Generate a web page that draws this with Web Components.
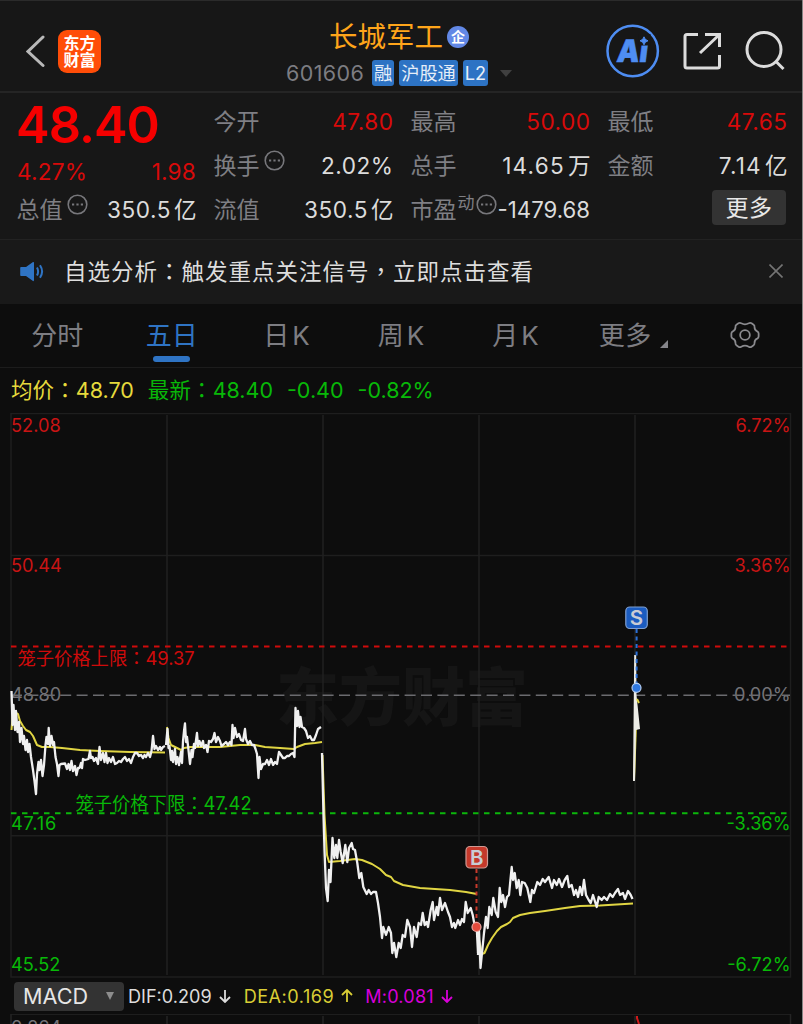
<!DOCTYPE html>
<html lang="zh-CN">
<head>
<meta charset="utf-8">
<title>长城军工 601606</title>
<style>
  html, body {
    margin: 0;
    height: 1024px;
    overflow: hidden;
    background: #0d0d0d;
  }
  body {
    font-family: Inter, "Noto Sans CJK SC", sans-serif;
    color: #dcdcdc;
  }
</style>
</head>
<body>
<stock-app></stock-app>

<script>
class StockApp extends HTMLElement {
  connectedCallback() {
    this.attachShadow({ mode: "open" });
    this.shadowRoot.innerHTML = `
    <style>
      :host {
        display: flex;
        flex-direction: column;
        box-sizing: border-box;
        width: 803px;
        height: 1024px;
        overflow: hidden;
        border-right: 1px solid #858585;
        background: #0d0d0d;
      }
    </style>
    <stock-header name="长城军工" code="601606"></stock-header>
    <quote-panel></quote-panel>
    <notice-bar>自选分析<span lang="zh-TW">：</span>触发重点关注信号<span lang="zh-TW">，</span>立即点击查看</notice-bar>
    <period-tabs></period-tabs>
    <price-legend></price-legend>
    <price-chart></price-chart>
    <macd-bar></macd-bar>
    <macd-chart></macd-chart>
    `;
  }
}

class StockHeader extends HTMLElement {
  connectedCallback() {
    this.attachShadow({ mode: "open" });
    this.shadowRoot.innerHTML = `
    <style>
      :host {
        display: grid;
        grid-template-columns: 270px 1fr 211px;
        box-sizing: border-box;
        height: 93px;
        flex: none;
        background: #171717;
        border-top: 1px solid #2b2b2b;
        border-bottom: 2px solid #252525;
      }
      svg { display: block; flex: none; fill: none; }
      .left { display: flex; align-items: center; box-sizing: border-box; padding: 11px 0 0 26px; gap: 12px; height: 89px; }
      .logo {
        display: flex;
        align-items: center;
        justify-content: center;
        width: 43px;
        height: 43px;
        border-radius: 9px;
        background: #ff4d08;
        color: #fff;
        font: 700 16px/17px "Noto Sans CJK SC";
      }
      .mid { display: flex; flex-direction: column; align-items: flex-start; padding: 16px 0 0 16px; }
      .name { display: flex; align-items: center; box-sizing: border-box; height: 38px; padding: 1px 0 0 43px; color: #ffa51a; font-size: 28.5px; line-height: 37px; }
      .ent {
        width: 22px; height: 22px; margin-left: 4px; border-radius: 50%;
        background: #6288e6; color: #fff;
        font-size: 14px; font-weight: 700; line-height: 22px; text-align: center;
      }
      .sub { display: flex; align-items: center; height: 26px; margin-top: 5px; }
      .code { width: 86px; font-size: 21.500px; letter-spacing: .4px; color: #7d7d82; }
      .tag { box-sizing: border-box; height: 26px; margin-right: 5px; padding: 0 2px; border-radius: 3px; background: #2d73c4; color: #e6eef8; font-size: 18.2px; line-height: 26px; }
      .arrow { margin-left: 7px; border: 6px solid transparent; border-top: 7px solid #404040; border-bottom: 0; }
      .right { display: flex; align-items: center; padding-left: 14px; height: 100px; }
    </style>
    <div class="left">
      <svg width="20" height="36" stroke="#b9b9b9" stroke-width="3" stroke-linecap="round"><path d="M17 4 2 18.500 17 32.500"/></svg>
      <div class="logo"><span>东方<br>财富</span></div>
    </div>
    <div class="mid">
      <div class="name">${this.getAttribute("name")}<span class="ent">企</span></div>
      <div class="sub">
        <span class="code">${this.getAttribute("code")}</span>
        <span class="tag">融</span><span class="tag">沪股通</span><span class="tag">L2</span>
        <span class="arrow"></span>
      </div>
    </div>
    <div class="right">
      <svg width="180" height="60" viewBox="605 21 180 60">
        <circle cx="632.7" cy="51" r="25.200" stroke="#4e8df2" stroke-width="2.500"/>
        <text transform="translate(616 62) skewX(-7)" font-size="31" font-weight="900" fill="#4e8df2" stroke="#4e8df2" stroke-width=".6" textLength="31" lengthAdjust="spacingAndGlyphs">Ai</text>
        <path d="M638.500 34h12v11.500h-12z" fill="#171717"/>
        <path d="M644 36.800q.7 3.200 4 4q-3.300.8-4 4q-.7-3.200-4-4q3.300-.8 4-4z" fill="#4e8df2" stroke="#4e8df2"/>
        <g stroke="#dcdcdc" stroke-width="3">
          <path d="M698 34.500H687q-2 0-2 2V66q0 2 2 2h30.500q2 0 2-2V55M705 34.500h14.500V47M719.500 34.500 700 53"/>
          <circle cx="764" cy="49.500" r="17"/>
          <path d="m775.500 61 8 8"/>
        </g>
      </svg>
    </div>
    `;
  }
}

// label on the left, slotted value on the right
class QuoteCell extends HTMLElement {
  connectedCallback() {
    const info = this.hasAttribute("info")
      ? `<svg width="21" height="21" fill="none" stroke="#77777b" stroke-width="1.600"><circle cx="10.500" cy="10.500" r="9.300"/><path d="M5 10.500h2.200M9.400 10.500h2.200M13.800 10.500H16" stroke-width="2.200"/></svg>`
      : "";
    const sup = this.getAttribute("sup") || "";
    this.attachShadow({ mode: "open" });
    this.shadowRoot.innerHTML = `
    <style>
      :host { display: flex; height: 44px; line-height: 44px; font-size: 22.600px; white-space: nowrap; color: #dcdcdc; }
      :host([up]) { color: #d80a0a; }
      .label { margin-left: -.5px; font-size: 23px; color: #7f7f84; }
      sup { font-size: 17px; line-height: 30px; color: #7f7f84; vertical-align: top; margin-left: 1px; }
      svg { margin: 6px 0 0 4px; }
      sup + svg { margin-left: 1px; }
      .value { margin-left: auto; letter-spacing: .5px; margin-right: -.5px; }
      sup ~ .value { font-size: 22.200px; letter-spacing: 0; margin-right: 0; }
    </style>
    <span class="label">${this.getAttribute("label")}</span>${sup ? `<sup>${sup}</sup>` : ""}${info}
    <span class="value"><slot></slot></span>
    `;
  }
}

class QuotePanel extends HTMLElement {
  connectedCallback() {
    this.attachShadow({ mode: "open" });
    this.shadowRoot.innerHTML = `
    <style>
      :host {
        display: grid;
        grid-template-columns: repeat(4, 179px);
        column-gap: 18px;
        box-sizing: border-box;
        height: 147px;
        flex: none;
        padding: 7px 0 0 17px;
        background: #171717;
        border-bottom: 1px solid #222;
      }
      .price { height: 50px; margin-left: -1px; font-size: 50.500px; font-weight: 600; line-height: 50px; letter-spacing: -1px; color: #f50000; }
      .change { display: flex; justify-content: space-between; height: 38px; font-size: 22.600px; line-height: 44px; letter-spacing: .2px; color: #d80a0a; }
      .u { margin-left: 3px; letter-spacing: 0; }
      .wide { letter-spacing: 1.200px; }
      .more { width: 74px; height: 35px; margin: 2px 1px 0 auto; border-radius: 4px; background: #333; font-size: 23px; line-height: 36px; text-align: center; color: #e8e8e8; letter-spacing: .5px; }
    </style>
    <div>
      <div class="price">48.40</div>
      <div class="change"><span>4.27%</span><span>1.98</span></div>
      <quote-cell label="总值" info>350.5<span class="u">亿</span></quote-cell>
    </div>
    <div>
      <quote-cell label="今开" up>47.80</quote-cell>
      <quote-cell label="换手" info>2.02%</quote-cell>
      <quote-cell label="流值">350.5<span class="u">亿</span></quote-cell>
    </div>
    <div>
      <quote-cell label="最高" up>50.00</quote-cell>
      <quote-cell label="总手"><span class="wide">14.65</span><span class="u">万</span></quote-cell>
      <quote-cell label="市盈" sup="动" info>-1479.68</quote-cell>
    </div>
    <div>
      <quote-cell label="最低" up>47.65</quote-cell>
      <quote-cell label="金额"><span class="wide">7.14</span><span class="u">亿</span></quote-cell>
      <div class="more">更多</div>
    </div>
    `;
  }
}

class NoticeBar extends HTMLElement {
  connectedCallback() {
    this.attachShadow({ mode: "open" });
    this.shadowRoot.innerHTML = `
    <style>
      :host {
        display: flex;
        align-items: center;
        box-sizing: border-box;
        height: 64px;
        flex: none;
        padding: 0 19px 2px 20px;
        background: #191919;
        font-size: 22.500px;
        letter-spacing: 1px;
        color: #dedede;
      }
      ::slotted(span) { font-family: "Noto Sans CJK TC"; }
      p { margin: 0 auto 0 19px; line-height: 32px; }
    </style>
    <svg width="25" height="22" fill="none" stroke="#2f74c4" stroke-width="2"><path d="M1 7h5l7-5q1-.5 1 1v17q0 1.500-1 1l-7-5H1q-.8 0-.8-1V8q0-1 .8-1z" fill="#2f74c4" stroke="none"/><path d="M17 7.500q2.200 4 0 8M20 5.200q4.200 6.300 0 12.600"/></svg>
    <p><slot></slot></p>
    <svg width="14" height="14" stroke="#747474" stroke-width="1.600"><path d="m.5.5 13 13M13.500.5l-13 13"/></svg>
    `;
  }
}

class PeriodTabs extends HTMLElement {
  connectedCallback() {
    this.attachShadow({ mode: "open" });
    const tabs = ["分时", "五日", "日<b></b>K", "周<b></b>K", "月<b></b>K", "更多"];
    this.shadowRoot.innerHTML = `
    <style>
      :host {
        display: grid;
        grid-template-columns: repeat(7, 1fr);
        box-sizing: border-box;
        height: 64px;
        flex: none;
        border-bottom: 1px solid #1c1c1c;
        font-size: 26px;
        color: #7d7d82;
      }
      div { display: flex; flex-direction: column; align-items: center; }
      span { height: 52px; line-height: 63px; white-space: nowrap; }
      b { display: inline-block; width: 3px; }
      .on { color: #2f74c4; }
      .on::after { content: ""; width: 37px; height: 6px; border-radius: 3px; background: #2f74c4; }
      .more { flex-direction: row; justify-content: center; align-items: flex-start; gap: 8px; padding-left: 6px; letter-spacing: .5px; }
      .more::after { content: ""; margin-top: 36px; border-left: 8px solid transparent; border-bottom: 8px solid #85858a; }
      .gear { justify-content: center; padding-bottom: 2px; }
    </style>
    ${tabs.map((t, i) => `<div class="${i === 1 ? "on" : i === 5 ? "more" : ""}"><span>${t}</span></div>`).join("")}
    <div class="gear"><svg width="30" height="28" viewBox="-16 -15 32 30" fill="none" stroke="#8a8a8e" stroke-width="1.900" stroke-linejoin="round">
      <path d="M-4-12.500q4 2.200 8 0q1.500-1 3 0l2.200 1.500q1.200.8 1 2.500q0 3.500 2.800 4.600q1.600.8 1.600 2.200v3.400q0 1.400-1.600 2.200q-2.800 1.100-2.800 4.600q.2 1.700-1 2.500L7 12.500q-1.500 1-3 0q-4-2.200-8 0q-1.500 1-3 0L-9.200 11q-1.200-.8-1-2.500q0-3.500-2.800-4.600q-1.600-.8-1.600-2.200v-3.400q0-1.400 1.600-2.200q2.800-1.100 2.800-4.600q-.2-1.700 1-2.500L-7-12.500q1.500-1 3 0z"/>
      <circle r="5.200"/></svg></div>
    `;
  }
}

class PriceLegend extends HTMLElement {
  connectedCallback() {
    this.attachShadow({ mode: "open" });
    this.shadowRoot.innerHTML = `
    <style>
      :host { display: flex; gap: 14px; height: 45px; flex: none; padding-left: 11px; font-size: 21.500px; line-height: 45px; color: #08b808; white-space: nowrap; }
      i { font-style: normal; line-height: 0; letter-spacing: .1px; }
      [lang] { font-family: "Noto Sans CJK TC"; }
      .avg { color: #e6da3c; }
    </style>
    <span class="avg"><i>均价</i><i lang="zh-TW">：</i>48.70</span>
    <span><i>最新</i><i lang="zh-TW">：</i>48.40</span>
    <span>-0.40</span>
    <span>-0.82%</span>
    `;
  }
}

// one entry per trading day
const PRICE = [
  "11.5,691 12.5,725 13.5,705 15,730 16,711 17.5,732 19,722 20,742 21.5,728 23,744 24,736 25.5,750 27,740 28,752 29.5,744 31,757 33,770 34.5,781 36,794 37,774 38.5,762 39.5,770 41,760 42.5,776 44,765 45.5,745 46.5,737 48,744 48.7,728 50,746 51.5,736 53,745 54,742 55.5,757 57,764 58.5,776 59.5,765 61,764 65,763.5 67,769 68.5,764 70,770 71.5,761 73,771 75,766 76.5,775 78,768 79.5,768 81,763 82,768 83,759 85,760 88.5,759 90,751 91,758 92.5,757 94,761 96,758 98,764 99.5,747 101,760 103,753 104.5,762 106,753 107.5,763 109,758 111,762 113,757 115,764 117,763 119,761 121,762 123,759 125,757 127,761 129,759 131,763 133,757 135,753 137,753 139,756 141,755 143,758 144.5,755 146,757 148,753 150,757 151.5,751 153,736 154.5,749 156,746 158,750 160,747 161,750 163,747 165,746",
  "166,745 167.5,729 168.5,748 169.5,746 171,760 172,751 173,762 175,749 176,764 177.5,757 179,765 181,752 182,763 183,741 184,731 185,723.5 186,742 187,737 188.5,750 190,764 191.5,750 192.5,757 194,744 195,748 197,733 198,746 199.5,741 201,746 203,741 204,748 206,745 207.5,752 209,741 211,742 213,739 214.5,733 216,742 218,737 220,741 221.5,746 224,744 226,742 228,745 230,742 231.5,745 232.5,725 233.5,738 235,728 237,737 239,734 241,740 243,741 245,729 246,739 248,744 250,741 252,745 254,745 255.5,749 257,754 258.5,778 259.5,757 261,769 263,764 265,764 267,760 269,765 271,759 273,765 275,762 277,764 279,752 281,755 283,758 285,758 287,756 289,756 291,754 293,753 294.5,757 295.5,708 297,726 298,711 299.5,727 300.5,717 302,727 304,728 306,731 308,738 310,736 312,740 314,740 316,735 318,729 321,727",
  "322,753 323.5,815 324.5,850 326,888 327.7,901 329,870 330.5,882 332.5,838 334.3,858 336,845 337.3,858 339,840 340.7,852 342.7,863 345.3,845 347.3,862 349,848 351.7,843 353,849 355,850 357.3,863 359.3,878 361.3,873 363.3,887 366.7,894 368.7,890 371,894 373,892 376,892 378,903 380,917 382,938 383.3,927 386,935 388.7,927 391,933 392.3,953 394,943 396.3,957 398.7,943 400.7,948 402.7,935 405,937 407.3,920 410,927 412,947 414,927 416.7,937 418.7,923 421,925 422.7,913 424.7,925 426.7,922 428,927 430.7,910 432.7,902 434,920 436.7,907 438,915 440,898 442,910 445,903 448,912 450,917 452,927 454,923 455.3,928 458,920 460,925 462,919 464,922 465.7,902 467.7,913 470.7,908 472.7,915 474,922 476.7,927 478,953",
  "478,955 479,930 480.5,968 482,953 484,933 486,917 487.7,928 489.3,907 491.7,915 493.3,898 495.7,912 498,917 499.7,888 501.3,902 503,895 505,907 507,897 509,895 510.7,877 511.7,867 513,880 514.7,873 516.7,888 518.7,880 520.3,895 522,882 524.7,883 527.3,888 530.3,902 532,890 534,893 537.3,882 540,885 542.7,879 545,882 548.7,877 552,888 554,880 556.7,885 559,879 562,887 564.7,880 567.3,876 569,887 571.7,885 574,895 576,890 578,897 580,887 582,895 584,880 586,895 588.7,900 590.7,903 593,895 596.7,907 598.7,897 601.7,900 604,897 607,900 610,894 612.7,897 615,893 618,889 620,895 623,893 625,899 628,891 630.7,895 632.500,899"
];
const AVERAGE = [
  "11.5,730 13,711 15,712 18,714 20,721 23,726 26,730 30,732 33,736 37,745 42,747 50,747 62,748 80,750 100,751 130,752 165,752.5",
  "167,727 168.5,738 171,745 177,748 181,750 184,748 190,747 200,747 220,747 240,745 255,745 265,747 280,748 294,749 297,747 305,744 315,743 322,742",
  "322.5,755 324.5,815 327,855 329,862 340,861 355,859 362,860 372,864 380,869 386,875 391,877 394,881 403,885 420,888 450,890 466,892 476.7,894",
  "479,940 482,954 484.5,953 488,945 492,938 497,931 501,927 507,924 510,922 513,918 520,915 530,913 545,911 565,908 580,906 600,905.5 633,903.5",
  "636,725 634,780"
];
const lines = (days, color, width) => days.map(d => `<polyline points="${d}" fill="none" stroke="${color}" stroke-width="${width}" stroke-linejoin="round"/>`).join("");

class PriceChart extends HTMLElement {
  connectedCallback() {
    this.attachShadow({ mode: "open" });
    this.shadowRoot.innerHTML = `
    <style>
      :host { display: block; height: 565px; flex: none; }
      svg { display: block; }
      text { font-size: 18.200px; }
      .r { text-anchor: end; }
      .up { fill: #c81414; }
      .down { fill: #08b808; }
      .flat { fill: #737378; }
      .cage { font-size: 18.300px; }
      .mark { font-size: 20.500px; font-weight: 600; text-anchor: middle; fill: #c9cdd4; }
      [lang] { font-family: "Noto Sans CJK TC"; }
    </style>
    <svg width="802" height="565" viewBox="0 413 802 565">
      <text x="276" y="720" style="font:900 63px 'Noto Sans CJK SC';fill:#151515" textLength="252">东方财富</text>
      <g stroke="#202020" stroke-width="1.500" fill="none">
        <path d="M11 413.500H790.500V977H11zM11 555.500H790M11 835.700H790" stroke="#1e1e1e"/>
        <path d="M167 415V975M323 415V975M479 415V975M635 415V975"/>
      </g>
      <path d="M11 646.500H790" stroke="#cf0b0b" stroke-width="2" stroke-dasharray="5.500"/>
      <path d="M11 813.300H790" stroke="#0bb60b" stroke-width="2" stroke-dasharray="5.500"/>
      <text class="up" x="11" y="431.500">52.08</text><text class="up r" x="790.500" y="431.500">6.72%</text>
      <text class="up" x="11" y="572">50.44</text><text class="up r" x="790.500" y="572">3.36%</text>
      <text class="flat" x="11" y="701">48.80</text><text class="flat r" x="790.500" y="701">0.00%</text>
      <text class="down" x="11" y="829.500" letter-spacing=".8">47.16</text><text class="down r" x="790.500" y="829.500">-3.36%</text>
      <text class="down" x="11" y="971">45.52</text><text class="down r" x="790.500" y="971">-6.72%</text>
      <path d="M11 695.300H790" stroke="#6b6b6f" stroke-width="1.500" stroke-dasharray="11 5.400"/>
      <text class="up cage" x="17.500" y="664.500" style="fill:#cf0b0b">笼子价格上限<tspan lang="zh-TW">：</tspan>49.37</text>
      <text class="down cage" x="75.500" y="809.500">笼子价格下限<tspan lang="zh-TW">：</tspan>47.42</text>
      ${lines(AVERAGE, "#e0d543", 2)}
      ${lines(PRICE, "#f0f0f0", 2.3)}
      <path d="M634.200 655h2l.3 40 3.500 34-4 1-1 51h-2z" fill="#ecece6"/>
      <path d="m637 699 2 4" stroke="#e0d543" stroke-width="2"/>
      <path d="M476.500 869V924" stroke="#c93a2c" stroke-width="2" stroke-dasharray="4 3.500"/>
      <circle cx="476.500" cy="927" r="4.500" fill="#e34a3c" stroke="#f0aaa4" stroke-width="1.200"/>
      <rect x="466" y="846.500" width="21.500" height="21.500" rx="4" fill="#c5392b" stroke="#cf9a94" stroke-width="1.200"/>
      <text class="mark" x="476.700" y="864.700">B</text>
      <path d="M636.600 629V684" stroke="#2a6fd6" stroke-width="2" stroke-dasharray="4 3.500"/>
      <circle cx="636.500" cy="687.800" r="4.500" fill="#2f78e0" stroke="#b4cdf2" stroke-width="1.200"/>
      <rect x="625.800" y="607" width="21.500" height="21.500" rx="4" fill="#1b5cc0" stroke="#7f9fd0" stroke-width="1.200"/>
      <text class="mark" x="636.500" y="625.200">S</text>
    </svg>
    `;
  }
}

class MacdBar extends HTMLElement {
  connectedCallback() {
    this.attachShadow({ mode: "open" });
    this.shadowRoot.innerHTML = `
    <style>
      :host { display: flex; align-items: center; height: 36px; flex: none; padding-left: 14px; font-size: 18.100px; white-space: nowrap; }
      .pick { display: flex; align-items: center; justify-content: space-between; box-sizing: border-box; width: 110px; height: 29px; margin-right: 4px; padding: 0 10px 0 9px; border-radius: 4px; background: #333; font-size: 21.600px; color: #e6e6e6; }
      .pick::after { content: ""; border: 4.500px solid transparent; border-top: 8px solid #8d8d8d; border-bottom: 0; }
      .item { display: flex; align-items: center; gap: 7px; margin-right: 13px; }
      svg { fill: none; stroke: currentColor; stroke-width: 1.800; }
      .dea { color: #d9cd35; letter-spacing: .5px; margin-right: 12px; }
      .m { color: #d800d8; letter-spacing: .2px; }
    </style>
    <span class="pick">MACD</span>
    <span class="item">DIF:0.209 <svg width="12" height="14"><path d="M6 1v12M1 8l5 5 5-5"/></svg></span>
    <span class="item dea">DEA:0.169 <svg width="12" height="14"><path d="M6 13V1M1 6l5-5 5 5"/></svg></span>
    <span class="item m">M:0.081 <svg width="12" height="14"><path d="M6 1v12M1 8l5 5 5-5"/></svg></span>
    `;
  }
}

class MacdChart extends HTMLElement {
  connectedCallback() {
    this.attachShadow({ mode: "open" });
    this.shadowRoot.innerHTML = `
    <style>
      :host { display: block; height: 10px; overflow: hidden; }
      svg { display: block; }
    </style>
    <svg width="802" height="10" viewBox="0 1014 802 10">
      <path d="M11 1024V1014H790.500V1024M167 1016V1024M323 1016V1024M479 1016V1024M635 1016V1024" fill="none" stroke="#242424" stroke-width="1.500"/>
      <text x="11" y="1033.500" font-size="18.200" fill="#737378">0.264</text>
      <path d="M637 1016v2l2 6" fill="none" stroke="#d01a1a" stroke-width="2"/>
    </svg>
    `;
  }
}

customElements.define("stock-app", StockApp);
customElements.define("stock-header", StockHeader);
customElements.define("quote-cell", QuoteCell);
customElements.define("quote-panel", QuotePanel);
customElements.define("notice-bar", NoticeBar);
customElements.define("period-tabs", PeriodTabs);
customElements.define("price-legend", PriceLegend);
customElements.define("price-chart", PriceChart);
customElements.define("macd-bar", MacdBar);
customElements.define("macd-chart", MacdChart);
</script>
</body>
</html>
